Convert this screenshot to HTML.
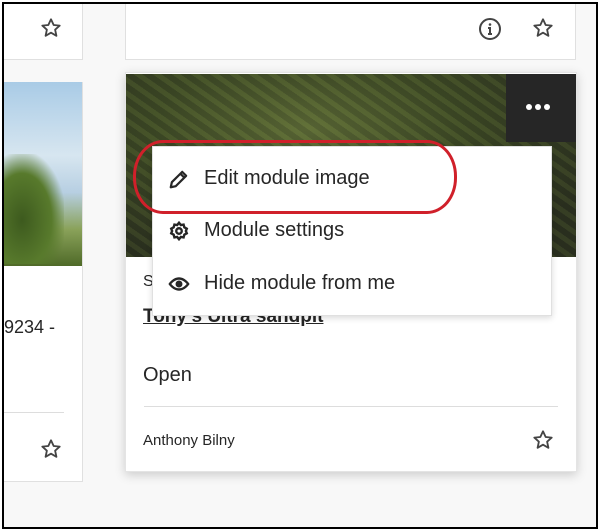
<!DOCTYPE html>
<html><head><style>
*{margin:0;padding:0;box-sizing:border-box}
body{width:600px;height:531px;background:#fff;position:relative;overflow:hidden;font-family:"Liberation Sans",sans-serif;color:#262626}
.frame{position:absolute;left:2px;top:2px;width:596px;height:527px;border:2px solid #000;background:#f8f8f8;overflow:hidden}
.abs{position:absolute}
.card{position:absolute;background:#fff;border:1px solid #e0e0e0}
.star{position:absolute;width:22px;height:22px}
</style></head><body>
<div class="frame">
  <div class="card" style="left:-2px;top:-2px;width:81px;height:58px"></div>
  <div class="card" style="left:121px;top:-2px;width:451px;height:58px"></div>
  <div class="card" style="left:-2px;top:78px;width:81px;height:400px"></div>
  <div class="abs" style="left:-2px;top:78px;width:80px;height:184px;background:linear-gradient(180deg,#a9cbe6 0%,#d7e6f0 40%,#b7cfe2 60%,#8aa25a 80%,#4f6a28 100%)"></div>
  <div class="abs" style="left:0;top:150px;width:60px;height:110px;background:radial-gradient(ellipse at 30% 60%,#3d5a1e 0%,#587a2c 50%,rgba(90,120,50,0) 75%)"></div>
  <div class="abs" style="left:0;top:313px;font-size:18px;color:#262626">9234 -</div>
  <div class="abs" style="left:0;top:408px;width:60px;height:1px;background:#ddd"></div>
  <div class="card" style="left:121px;top:68px;width:452px;height:400px;box-shadow:0 3px 10px rgba(0,0,0,.18);border-color:#e4e4e4"></div>
  <div class="abs" style="left:122px;top:70px;width:450px;height:183px;background:radial-gradient(ellipse at 40% 30%,#5f6d38 0%,#3e4a26 40%,#2b3020 80%),#2d3222"></div>
  <div class="abs" style="left:122px;top:70px;width:450px;height:183px;background:repeating-linear-gradient(35deg,rgba(120,140,60,.15) 0 5px,rgba(30,35,20,.15) 5px 11px)"></div>
  <div class="abs" style="left:502px;top:70px;width:70px;height:68px;background:#262626"></div>
  <div class="abs" style="left:522px;top:100px;width:6px;height:6px;border-radius:50%;background:#fff;box-shadow:9px 0 #fff,18px 0 #fff"></div>
  <div class="abs" style="left:139px;top:269px;font-size:16px">S</div>
  <div class="abs" style="left:139px;top:302px;font-size:19px;text-decoration:underline;font-weight:bold">Tony's Ultra sandpit</div>
  <div class="abs" style="left:139px;top:360px;font-size:20px">Open</div>
  <div class="abs" style="left:140px;top:402px;width:414px;height:1px;background:#ddd"></div>
  <div class="abs" style="left:139px;top:428px;font-size:15px">Anthony Bilny</div>
  <!-- menu -->
  <div class="abs" style="left:148px;top:142px;width:400px;height:170px;background:#fff;border:1px solid #e0e0e0;box-shadow:0 2px 6px rgba(0,0,0,.15)"></div>
  <svg class="abs" style="left:164px;top:164px" width="22" height="22" viewBox="0 0 24 24" fill="none" stroke="#262626" stroke-width="2.4" stroke-linejoin="round"><path d="M3 21l1.2-5.5L15.5 4.2l4.3 4.3L8.5 19.8z M13.5 6.2l4.3 4.3"/></svg>
  <div class="abs" style="left:200px;top:163px;font-size:20px">Edit module image</div>
  <svg class="abs" style="left:164px;top:216px" width="22" height="22" viewBox="0 0 24 24" fill="none" stroke="#262626" stroke-width="2.6"><circle cx="12" cy="12" r="3"/><path d="M12 3l2 2.5 3-.5.8 3 2.7 1.5-1 2.5 1 2.5-2.7 1.5-.8 3-3-.5L12 21l-2-2.5-3 .5-.8-3L3.5 14.5l1-2.5-1-2.5L6.2 8l.8-3 3 .5z"/></svg>
  <div class="abs" style="left:200px;top:215px;font-size:20px">Module settings</div>
  <svg class="abs" style="left:164px;top:269px" width="22" height="22" viewBox="0 0 24 24" fill="none" stroke="#262626" stroke-width="2.6"><path d="M2 12s4-6 10-6 10 6 10 6-4 6-10 6S2 12 2 12z"/><circle cx="12" cy="12" r="2.5" fill="#262626"/></svg>
  <div class="abs" style="left:200px;top:268px;font-size:20px">Hide module from me</div>
  <div class="abs" style="left:129px;top:136px;width:324px;height:74px;border:3px solid #d0202a;border-radius:30px/36px"></div>
  <!-- icons -->
  <svg class="abs" style="left:474px;top:13px" width="24" height="24" viewBox="0 0 24 24" fill="none" stroke="#444" stroke-width="2"><circle cx="12" cy="12" r="10"/><circle cx="12" cy="7.5" r="1.3" fill="#444" stroke="none"/><path d="M10 11h2v6M10 17h4"/></svg>
  <svg class="star" style="left:36px;top:13px" viewBox="0 0 24 24" fill="none" stroke="#444" stroke-width="2" stroke-linejoin="round"><path d="M12 2.5l2.9 6.2 6.6.7-5 4.5 1.4 6.6L12 17.1l-5.9 3.4 1.4-6.6-5-4.5 6.6-.7z"/></svg>
  <svg class="star" style="left:528px;top:13px" viewBox="0 0 24 24" fill="none" stroke="#444" stroke-width="2" stroke-linejoin="round"><path d="M12 2.5l2.9 6.2 6.6.7-5 4.5 1.4 6.6L12 17.1l-5.9 3.4 1.4-6.6-5-4.5 6.6-.7z"/></svg>
  <svg class="star" style="left:36px;top:434px" viewBox="0 0 24 24" fill="none" stroke="#444" stroke-width="2" stroke-linejoin="round"><path d="M12 2.5l2.9 6.2 6.6.7-5 4.5 1.4 6.6L12 17.1l-5.9 3.4 1.4-6.6-5-4.5 6.6-.7z"/></svg>
  <svg class="star" style="left:528px;top:425px" viewBox="0 0 24 24" fill="none" stroke="#444" stroke-width="2" stroke-linejoin="round"><path d="M12 2.5l2.9 6.2 6.6.7-5 4.5 1.4 6.6L12 17.1l-5.9 3.4 1.4-6.6-5-4.5 6.6-.7z"/></svg>
</div>
</body></html>
